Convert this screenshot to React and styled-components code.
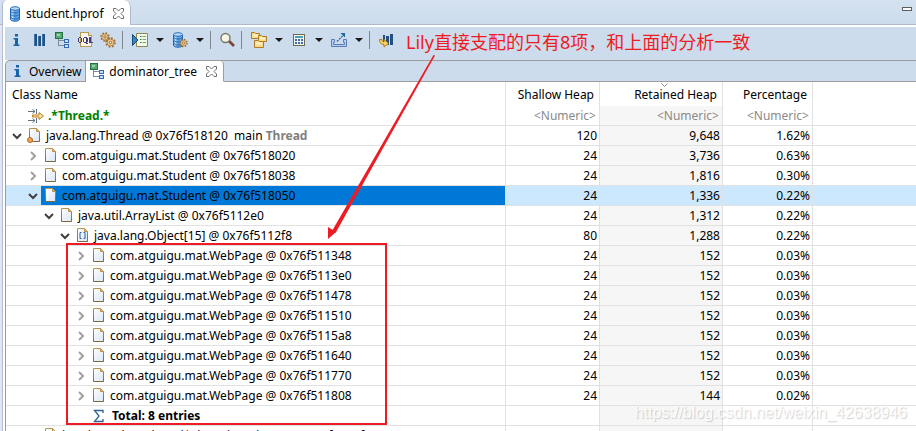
import React from "react";
import styled, { createGlobalStyle, css } from "styled-components";

const GlobalStyle = createGlobalStyle`
  * { box-sizing: border-box; }
  body { margin: 0; background: #fff; }
  button { font: inherit; color: inherit; background: none; border: 0; padding: 0; margin: 0; }
  svg { display: block; flex: none; }
`;

const Page = styled.main`
  position: relative;
  display: flex;
  flex-direction: column;
  height: 100vh;
  overflow: hidden;
  background: #e1e6f6;
  color: #000;
  font: 12px/19px "Noto Sans", "Noto Sans CJK SC", sans-serif;
`;

const EditorBar = styled.header`
  flex: none;
  display: flex;
  align-items: stretch;
  justify-content: space-between;
  height: 25px;
  padding-left: 2px;
  background: linear-gradient(#d3e1f1, #cddcec);
  border-bottom: 1px solid #b1b9cd;
`;

const EditorTab = styled.div`
  display: flex;
  align-items: center;
  height: 25px;
  padding: 2px 6px 0 6px;
  border: 1px solid #b1b9cd;
  border-width: 0 1px 0 1px;
  border-radius: 5px 7px 0 0;
  background: #fff;
`;

const TabLabel = styled.button`
  display: flex;
  align-items: center;
  gap: ${(p) => p.$gap || 5}px;
  white-space: nowrap;
`;

const CloseButton = styled.button`
  margin-left: 9px;
`;

const MinimizeButton = styled.button`
  align-self: flex-start;
  width: 10px;
  height: 4px;
  margin: 7px 4px 0 0;
  && {
    border: 1px solid #5c5c5c;
    background: #fff;
  }
`;

const EditorBody = styled.section`
  flex: 1;
  display: flex;
  flex-direction: column;
  min-height: 0;
  margin-left: 2px;
  padding: 2px 0 0 2px;
  border-left: 1px solid #b6bed2;
  background: #fff;
`;

const Toolbar = styled.div`
  flex: none;
  display: flex;
  align-items: center;
  height: 33px;
  padding: 0 0 7px 3px;
  background: #cddcec;
`;

const ToolGroup = styled.div`
  display: flex;
  align-items: center;
  gap: ${(p) => p.$gap}px;
`;

const ToolButton = styled.button`
  display: flex;
  align-items: center;
  gap: 8px;
`;

const Separator = styled.span`
  width: 1px;
  height: 18px;
  margin: 0 9px 0 6px;
  background: #7c8590;
`;

const ViewTabs = styled.nav`
  flex: none;
  display: flex;
  height: 22px;
  border-top: 1px solid #9c9c9c;
  border-left: 1px solid #9c9c9c;
  border-top-left-radius: 5px;
  background: #cddcec;
`;

const ViewTab = styled.div`
  display: flex;
  align-items: center;
  padding: ${(p) => (p.$active ? "0 6px 0 3px" : "0 4px 0 3px")};
  border-right: 1px solid #9c9c9c;
  border-bottom: 1px solid ${(p) => (p.$active ? "#fff" : "#9c9c9c")};
  border-top-right-radius: ${(p) => (p.$active ? 4 : 0)}px;
  background: ${(p) => (p.$active ? "#fff" : "transparent")};
`;

const TabsFiller = styled.div`
  flex: 1;
  border-bottom: 1px solid #9c9c9c;
`;

const TreeTable = styled.table`
  width: 100%;
  table-layout: fixed;
  border-collapse: separate;
  border-spacing: 0;
  border-left: 1px solid #9c9c9c;
  background: #fff;
`;

const Col = styled.col`
  width: ${(p) => p.$width || "auto"};
`;

const line = "#e1e1e1";

const HeadCell = styled.th`
  position: relative;
  height: 24px;
  padding: 0 5px 0 6px;
  font-weight: 400;
  white-space: nowrap;
  text-align: ${(p) => p.$align || "right"};
  border-right: ${(p) => (p.$last ? 0 : 1)}px solid ${line};
`;

const SortMark = styled.svg`
  position: absolute;
  top: 1px;
  left: 50%;
`;

const Cell = styled.td`
  height: 20px;
  padding: 0 ${(p) => (p.$filter ? 3 : 2)}px 0 0;
  text-align: right;
  white-space: nowrap;
  overflow: hidden;
  border-right: ${(p) => (p.$last ? 0 : 1)}px solid ${line};
  border-bottom: 1px solid ${line};
  ${(p) => p.$sorted && css`background: #f6f6f6;`}
  ${(p) => p.$filter && css`color: #8a8a8a;`}
`;

const Row = styled.tr`
  ${(p) => p.$selected && css`
    ${Cell} { background: #cce8ff; }
  `}
`;

const NameCell = styled(Cell)`
  padding: 0;
  text-align: left;
`;

const NodeLine = styled.div`
  display: flex;
  height: 19px;
  padding-left: ${(p) => 6 + p.$level * 16}px;
`;

const Toggle = styled.button`
  display: flex;
  align-items: center;
  width: 13px;
`;

const NodeLabel = styled.span`
  flex: 1;
  display: flex;
  align-items: center;
  gap: ${(p) => (p.$bold ? 7 : 5)}px;
  padding-left: 2px;
  background: ${(p) => (p.$selected ? "#0078d7" : "transparent")};
  font-weight: ${(p) => (p.$bold ? 700 : 400)};
  white-space: pre;
`;

const Kind = styled.b`
  color: #808080;
`;

const FilterLine = styled.div`
  display: flex;
  align-items: center;
  gap: 4px;
  padding-left: 22px;
  color: #008000;
  font-weight: 700;
`;

const Highlight = styled.div`
  position: absolute;
  left: 66px;
  top: 243px;
  width: 321px;
  height: 182px;
  border: 2px solid #ed1c24;
`;

const Note = styled.p`
  position: absolute;
  left: 406px;
  top: 28px;
  margin: 0;
  color: #ed1c24;
  font-size: 18px;
  line-height: 28px;
  white-space: nowrap;
`;

const Arrow = styled.svg`
  position: absolute;
  left: 326px;
  top: 54px;
`;

const Watermark = styled.p`
  position: absolute;
  right: 9px;
  bottom: 8px;
  margin: 0;
  color: rgba(255, 255, 255, 0.9);
  font: 16px/20px "Liberation Sans", sans-serif;
  text-shadow: 1px 1px 1px rgba(120, 120, 120, 0.35);
`;

const DatabaseShape = () => (
  <>
    <path d="M1.500 2.500v10.500c0 3 9 3 9 0V2.500z" fill="#5fa5e6" stroke="#2264b4" />
    <path d="M3.500 4v10" stroke="#b5daf8" strokeWidth="2" />
    <ellipse cx="6" cy="2.500" rx="4.500" ry="1.800" fill="#b5daf8" stroke="#2a6fbd" />
    <path d="M2 5.500c1 2 7 2 8 0M2 8.500c1 2 7 2 8 0M2 11.500c1 2 7 2 8 0" fill="none" stroke="#1c5fae" />
  </>
);

const DatabaseIcon = () => (
  <svg width="12" height="16" viewBox="0 0 12 16"><DatabaseShape /></svg>
);

const CloseIcon = () => (
  <svg width="11" height="11" viewBox="0 0 11 11">
    <path d="M.5.5h2.500L5.500 3 8 .5h2.500V3L8 5.500 10.500 8v2.500H8L5.500 8 3 10.500H.5V8L3 5.500.5 3z" fill="#fff" stroke="#6e6e6e" />
  </svg>
);

const InfoIcon = () => (
  <svg width="16" height="16" viewBox="0 0 16 16">
    <path d="M7 2h3v2.500H7zM5.500 6H10v6.500h1.500V14h-6v-1.500H7v-5H5.500z" fill="#1565a8" />
  </svg>
);

const BarsIcon = () => (
  <svg width="16" height="16" viewBox="0 0 16 16" shapeRendering="crispEdges">
    <path d="M3 2h3v12H3zM7 4h3v10H7zM11 2h3v12h-3z" fill="#24507f" />
    <path d="M3 2h1v12H3zM7 4h1v10H7zM11 2h1v12h-1z" fill="#3d74ab" />
  </svg>
);

const TreeIcon = () => (
  <svg width="16" height="16" viewBox="0 0 16 16" shapeRendering="crispEdges">
    <path d="M4.500 7v6.500H10M4.500 8.500H10" fill="none" stroke="#7d8b9b" />
    <path d="M1.500.5h7v6h-7z" fill="#56ab72" stroke="#257345" />
    <path d="M3 2h3v2H3z" fill="#98d5a8" />
    <path d="M10.500 7.500h4v3h-4zM10.500 12.500h4v3h-4z" fill="#c4e0ff" stroke="#3568b5" />
  </svg>
);

const OqlIcon = () => (
  <svg width="16" height="16" viewBox="0 0 16 16" shapeRendering="crispEdges">
    <path d="M3.500.5h8l3 3v11h-11z" fill="#fbf7e8" stroke="#b79a56" />
    <path d="M11.500.5v3h3" fill="#ecd18b" stroke="#b79a56" />
    <path d="M2 5h2v1h1v4H4v1H2v-1H1V6h1zM2 6v4h2V6zM7 5h3v1h1v4h-1v1h1v1H9v-1H7v-1H6V6h1zM7 6v4h2V6zM12 5h2v5h2v1h-4z" fill="#493c76" fillRule="evenodd" />
  </svg>
);

const GearShape = ({ r = 3.4 }) => (
  <>
    <circle r={r + 1} fill="none" stroke="#9a6a2e" strokeWidth="1.800" strokeDasharray="1.75 1.7" />
    <circle r={r} fill="#f3d196" stroke="#a5743a" strokeWidth=".8" />
    <circle r="1.300" fill="#fff4dc" stroke="#946329" />
  </>
);

const GearsIcon = () => (
  <svg width="16" height="16" viewBox="0 0 16 16">
    <g transform="translate(5 5) scale(.9)"><GearShape /></g>
    <g transform="translate(10.500 10.500)"><GearShape /></g>
  </svg>
);

const RunReportIcon = () => (
  <svg width="16" height="16" viewBox="0 0 16 16">
    <path d="M4.500 1.500h11v13h-11z" fill="#f4f8e6" stroke="#8a8a4e" />
    <path d="M8 4.500h1.500M8 7.500h1.500M8 10.500h1.500" stroke="#287a4a" />
    <path d="M10.500 4.500H14M10.500 7.500H14M10.500 10.500H14" stroke="#6aa786" />
    <path d="M.5 2.500v11L6 8z" fill="#3c86c0" stroke="#174a7e" />
  </svg>
);

const DatabaseGearIcon = () => (
  <svg width="16" height="16" viewBox="0 0 16 16">
    <DatabaseShape />
    <g transform="translate(11.500 11) scale(.82)"><GearShape /></g>
  </svg>
);

const SearchIcon = () => (
  <svg width="15" height="16" viewBox="0 0 15 16">
    <path d="M9 9l5 5" stroke="#7c452e" strokeWidth="2.600" />
    <circle cx="5.500" cy="6" r="4.500" fill="#f7f6e4" stroke="#77776a" strokeWidth="1.400" />
    <path d="M3 5.500C3.500 4 5 3.500 6 3.500" fill="none" stroke="#fff" />
  </svg>
);

const FoldersIcon = () => (
  <svg width="16" height="16" viewBox="0 0 16 16">
    <g fill="#f7dc8f" stroke="#b07a25">
      <path d="M.5.5h3l1 1h4v5h-8z" />
      <path d="M7.500 3.500h3l1 1h4v5h-8z" />
      <path d="M3.500 8.500h4l1 1h4v6h-9z" />
    </g>
    <path d="M2 3.500h5M9 6.500h5M5 11.500h6" stroke="#fdf2c6" strokeWidth="2" />
  </svg>
);

const CalculatorIcon = () => (
  <svg width="16" height="16" viewBox="0 0 16 16" shapeRendering="crispEdges">
    <path d="M2.500 2.500h11v11h-11z" fill="#f3f7f2" stroke="#6b6b50" />
    <path d="M4 4h8v2H4z" fill="#4f9fae" />
    <path d="M4 7h2v2H4zM7 7h2v2H7zM10 7h2v2h-2zM4 10h2v2H4zM7 10h2v2H7zM10 10h2v2h-2z" fill="#3f6da6" />
  </svg>
);

const ExportIcon = () => (
  <svg width="16" height="16" viewBox="0 0 16 16">
    <path d="M.5 7.500h3v3h-1v2h11v-2h-1v-3h3v7H.5z" fill="#b5cdf0" stroke="#5b7db8" />
    <path d="M6 9.500L12 3.500" stroke="#1e659c" strokeWidth="1.300" strokeDasharray="2 1" />
    <path d="M9.500 1H14v4.500z" fill="#1e659c" />
  </svg>
);

const BarsArrowIcon = () => (
  <svg width="16" height="16" viewBox="0 0 16 16">
    <path d="M4 3h2v7H4zM7 4h3v9H7zM11 2h3v11h-3z" fill="#24507f" />
    <path d="M.5 7.500h2.500c0 2 1 2.500 2 2.500V7.500L9.500 11.500 5 15v-2.500C2 12.500.5 10.500.5 7.500z" fill="#f9d768" stroke="#b27b16" />
  </svg>
);

const CaretIcon = () => (
  <svg width="8" height="4" viewBox="0 0 8 4"><path d="M0 0h8L4 4z" fill="#1a1a1a" /></svg>
);

const FilterIcon = () => (
  <svg width="16" height="14" viewBox="0 0 16 14">
    <path d="M0 2.500h7M4.500.5l2.500 2-2.500 2M8.500 0v5M0 11.500h7M4.500 9.500l2.500 2-2.500 2M8.500 9v5" fill="none" stroke="#66727f" />
    <path d="M4.500 6H11V3.500L15.500 7 11 10.500V8H4.500z" fill="#fbe3a5" stroke="#b98124" />
  </svg>
);

const Chevron = ({ open }) => (
  <svg width="10" height="10" viewBox="0 0 10 10">
    {open
      ? <path d="M1 3l4 4 4-4" fill="none" stroke="#404040" strokeWidth="2" />
      : <path d="M3 1l4 4-4 4" fill="none" stroke="#a0a0a0" strokeWidth="2" />}
  </svg>
);

const ObjectIcon = ({ kind }) => (
  <svg width="14" height="15" viewBox="0 0 14 15">
    <defs>
      <linearGradient id="paper" x2="1" y2="1">
        <stop stopColor="#fff" />
        <stop offset="1" stopColor="#d9e5f8" />
      </linearGradient>
      <linearGradient id="edge" x2="0" y2="1">
        <stop stopColor="#b8924a" />
        <stop offset="1" stopColor="#7c6a38" />
      </linearGradient>
    </defs>
    <path d="M2.500.5h7l3 3v10h-10z" fill="url(#paper)" stroke="url(#edge)" />
    <path d="M9.500.5v3h3z" fill="#e9c878" stroke="#b8924a" />
    {kind === "array" && (
      <path d="M6.500 4.500H5v6h1.500M8.500 4.500H10v6H8.500" fill="none" stroke="#2a62a5" />
    )}
    {kind === "root" && <circle cx="3" cy="12" r="2.500" fill="#f5a552" stroke="#b9641b" />}
  </svg>
);

const SumIcon = () => (
  <svg width="14" height="16" viewBox="0 0 14 16">
    <path d="M12 5V2.500H3.500L8 8l-4.500 5.500H12V11" fill="none" stroke="#2f6391" strokeWidth="1.300" />
  </svg>
);

const menus = [
  ["Run report", RunReportIcon],
  ["Query browser", DatabaseGearIcon],
];
const exportMenus = [
  ["Group by", FoldersIcon],
  ["Calculate retained size", CalculatorIcon],
  ["Export", ExportIcon],
];
const tools = [
  ["Overview", InfoIcon],
  ["Histogram", BarsIcon],
  ["Dominator tree", TreeIcon],
  ["OQL", OqlIcon],
  ["Thread overview", GearsIcon],
];

const web = (address, retained, share) => ({
  level: 4, name: `com.atguigu.mat.WebPage @ ${address}`, values: ["24", retained, share],
});

const rows = [
  { level: 0, open: true, icon: "root", name: "java.lang.Thread @ 0x76f518120  main ", kind: "Thread", values: ["120", "9,648", "1.62%"] },
  { level: 1, name: "com.atguigu.mat.Student @ 0x76f518020", values: ["24", "3,736", "0.63%"] },
  { level: 1, name: "com.atguigu.mat.Student @ 0x76f518038", values: ["24", "1,816", "0.30%"] },
  { level: 1, open: true, selected: true, name: "com.atguigu.mat.Student @ 0x76f518050", values: ["24", "1,336", "0.22%"] },
  { level: 2, open: true, name: "java.util.ArrayList @ 0x76f5112e0", values: ["24", "1,312", "0.22%"] },
  { level: 3, open: true, icon: "array", name: "java.lang.Object[15] @ 0x76f5112f8", values: ["80", "1,288", "0.22%"] },
  web("0x76f511348", "152", "0.03%"),
  web("0x76f5113e0", "152", "0.03%"),
  web("0x76f511478", "152", "0.03%"),
  web("0x76f511510", "152", "0.03%"),
  web("0x76f5115a8", "152", "0.03%"),
  web("0x76f511640", "152", "0.03%"),
  web("0x76f511770", "152", "0.03%"),
  web("0x76f511808", "144", "0.02%"),
  { level: 4, total: true, name: "Total: 8 entries", values: ["", "", ""] },
  { level: 1, name: "java.lang.ThreadLocal$ThreadLocalMap @ 0x76f5183f8", values: ["", "", ""] },
];

const MenuTool = ({ label, icon: Icon }) => (
  <ToolButton aria-label={label}><Icon /><CaretIcon /></ToolButton>
);

const TreeRow = ({ row }) => (
  <Row $selected={row.selected}>
    <NameCell>
      <NodeLine $level={row.level}>
        {row.total
          ? <Toggle as="span" />
          : <Toggle aria-label={row.open ? "Collapse" : "Expand"}><Chevron open={row.open} /></Toggle>}
        <NodeLabel $selected={row.selected} $bold={row.total}>
          {row.total ? <SumIcon /> : <ObjectIcon kind={row.icon} />}
          <span>{row.name}{row.kind && <Kind>{row.kind}</Kind>}</span>
        </NodeLabel>
      </NodeLine>
    </NameCell>
    <Cell>{row.values[0]}</Cell>
    <Cell $sorted>{row.values[1]}</Cell>
    <Cell>{row.values[2]}</Cell>
    <Cell $last />
  </Row>
);

export default function App() {
  return (
    <Page>
      <GlobalStyle />
      <EditorBar>
        <EditorTab>
          <TabLabel><DatabaseIcon />student.hprof</TabLabel>
          <CloseButton aria-label="Close student.hprof"><CloseIcon /></CloseButton>
        </EditorTab>
        <MinimizeButton aria-label="Minimize" />
      </EditorBar>
      <EditorBody>
        <Toolbar>
          <ToolGroup $gap={7}>
            {tools.map(([label, Icon]) => (
              <ToolButton key={label} aria-label={label}><Icon /></ToolButton>
            ))}
          </ToolGroup>
          <Separator />
          <ToolGroup $gap={8}>
            {menus.map(([label, icon]) => <MenuTool key={label} label={label} icon={icon} />)}
          </ToolGroup>
          <Separator />
          <ToolButton aria-label="Search"><SearchIcon /></ToolButton>
          <Separator />
          <ToolGroup $gap={8}>
            {exportMenus.map(([label, icon]) => <MenuTool key={label} label={label} icon={icon} />)}
          </ToolGroup>
          <Separator />
          <ToolButton aria-label="Compare"><BarsArrowIcon /></ToolButton>
        </Toolbar>
        <ViewTabs>
          <ViewTab>
            <TabLabel $gap={4}><InfoIcon />Overview</TabLabel>
          </ViewTab>
          <ViewTab $active>
            <TabLabel $gap={4}><TreeIcon />dominator_tree</TabLabel>
            <CloseButton aria-label="Close dominator_tree"><CloseIcon /></CloseButton>
          </ViewTab>
          <TabsFiller />
        </ViewTabs>
        <TreeTable>
          <colgroup>
            <Col $width="500px" />
            <Col $width="94px" />
            <Col $width="123px" />
            <Col $width="90px" />
            <Col />
          </colgroup>
          <thead>
            <tr>
              <HeadCell $align="left">Class Name</HeadCell>
              <HeadCell>Shallow Heap</HeadCell>
              <HeadCell>
                <SortMark width="7" height="4" viewBox="0 0 7 4">
                  <path d="M.5.5l3 3 3-3" fill="none" stroke="#8a8a8a" />
                </SortMark>
                Retained Heap
              </HeadCell>
              <HeadCell>Percentage</HeadCell>
              <HeadCell $last />
            </tr>
          </thead>
          <tbody>
            <tr>
              <NameCell><FilterLine><FilterIcon />.*Thread.*</FilterLine></NameCell>
              <Cell $filter>&lt;Numeric&gt;</Cell>
              <Cell $filter $sorted>&lt;Numeric&gt;</Cell>
              <Cell $filter>&lt;Numeric&gt;</Cell>
              <Cell $last />
            </tr>
            {rows.map((row) => <TreeRow key={row.name} row={row} />)}
          </tbody>
        </TreeTable>
      </EditorBody>
      <Highlight />
      <Arrow width="110" height="188" viewBox="0 0 110 188">
        <path d="M107.500 1L109 1.500 9.500 179 6 177z" fill="#ed1c24" />
        <path d="M2 185V173l8 5z" fill="#ed1c24" />
      </Arrow>
      <Note>Lily直接支配的只有8项，和上面的分析一致</Note>
      <Watermark>https://blog.csdn.net/weixin_42638946</Watermark>
    </Page>
  );
}
